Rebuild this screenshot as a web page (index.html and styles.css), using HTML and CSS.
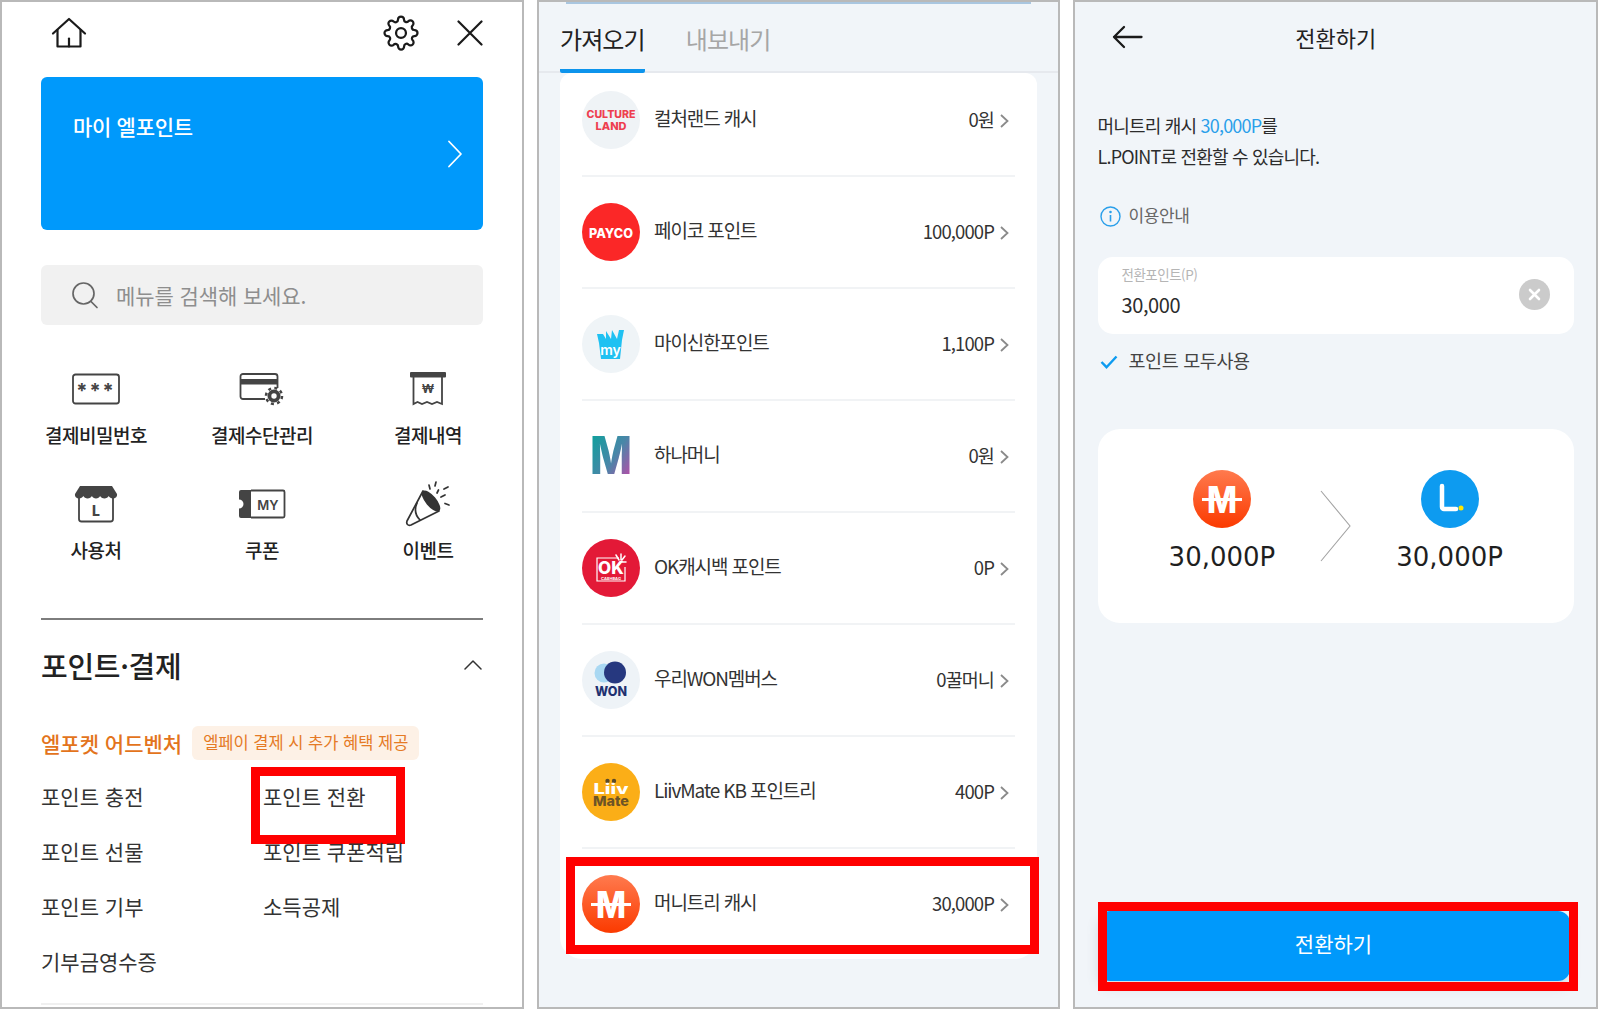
FILE: index.html
```html
<!DOCTYPE html>
<html lang="ko">
<head>
<meta charset="utf-8">
<title>포인트 전환</title>
<link rel="stylesheet" href="styles.css">
</head>
<body>
<main class="screens">

<section class="panel panel-menu">
  <header class="topbar">
    <svg class="i-home" width="36" height="32" viewBox="0 0 36 32" fill="none" stroke="#1a1a1a" stroke-width="2.2" stroke-linejoin="round" stroke-linecap="round"><path d="M2 16.5 18 2l16 14.5"/><path d="M6.500 13v16.500h23V13"/><path d="M18 29.500v-8"/></svg>
    <span class="topbar-right">
      <svg width="36" height="36" viewBox="0 0 24 24" fill="none" stroke="#1a1a1a" stroke-width="1.5"><circle cx="12" cy="12" r="3.300"/><path d="M19.400 15a1.650 1.650 0 0 0 .33 1.820l.06.06a2 2 0 0 1 0 2.830 2 2 0 0 1-2.830 0l-.06-.06a1.650 1.650 0 0 0-1.820-.33 1.650 1.650 0 0 0-1 1.510V21a2 2 0 0 1-2 2 2 2 0 0 1-2-2v-.09A1.650 1.650 0 0 0 9 19.400a1.650 1.650 0 0 0-1.820.33l-.06.06a2 2 0 0 1-2.830 0 2 2 0 0 1 0-2.830l.06-.06a1.650 1.650 0 0 0 .33-1.820 1.650 1.650 0 0 0-1.510-1H3a2 2 0 0 1-2-2 2 2 0 0 1 2-2h.09A1.650 1.650 0 0 0 4.600 9a1.650 1.650 0 0 0-.33-1.820l-.06-.06a2 2 0 0 1 0-2.830 2 2 0 0 1 2.830 0l.06.06a1.650 1.650 0 0 0 1.820.33H9a1.650 1.650 0 0 0 1-1.510V3a2 2 0 0 1 2-2 2 2 0 0 1 2 2v.09a1.650 1.650 0 0 0 1 1.510 1.650 1.650 0 0 0 1.820-.33l.06-.06a2 2 0 0 1 2.830 0 2 2 0 0 1 0 2.830l-.06.06a1.650 1.650 0 0 0-.33 1.820V9a1.650 1.650 0 0 0 1.510 1H21a2 2 0 0 1 2 2 2 2 0 0 1-2 2h-.09a1.650 1.650 0 0 0-1.510 1z"/></svg>
      <svg width="26" height="26" viewBox="0 0 26 26" fill="none" stroke="#1a1a1a" stroke-width="2.200" stroke-linecap="round"><path d="M1.500 1.500l23 23M24.500 1.500l-23 23"/></svg>
    </span>
  </header>

  <div class="mypoint">
    <span class="mypoint-title">마이 엘포인트</span>
    <svg class="mypoint-arrow" width="16" height="28" viewBox="0 0 16 28" fill="none" stroke="#fff" stroke-width="1.800" stroke-linecap="round" stroke-linejoin="round"><path d="M2 1.500 14 14 2 26.500"/></svg>
  </div>

  <div class="search">
    <svg width="28" height="28" viewBox="0 0 28 28" fill="none" stroke="#666" stroke-width="1.700" stroke-linecap="round"><circle cx="12.500" cy="12.500" r="10.500"/><path d="M20 20.500l6 6"/></svg>
    <span>메뉴를 검색해 보세요.</span>
  </div>

  <div class="shortcuts">
    <div class="shortcut">
      <span class="shortcut-icon"><svg width="48" height="32" viewBox="0 0 48 32"><rect x="1" y="1.500" width="46" height="29" rx="2.500" fill="none" stroke="#444" stroke-width="1.800"/><text class="svgtxt" x="24" y="25" text-anchor="middle" font-size="20" font-weight="700" letter-spacing="2" fill="#444">***</text></svg></span>
      <span class="shortcut-label">결제비밀번호</span>
    </div>
    <div class="shortcut">
      <span class="shortcut-icon"><svg width="46" height="36" viewBox="0 0 46 36"><path d="M26 28H4a2.500 2.500 0 0 1-2.500-2.500v-20A2.500 2.500 0 0 1 4 3h32a2.500 2.500 0 0 1 2.500 2.500V17" fill="none" stroke="#444" stroke-width="1.800"/><rect x="1.500" y="8" width="37" height="5.500" fill="#444"/><circle cx="35" cy="25" r="6.500" fill="#444"/><circle cx="35" cy="25" r="8" fill="none" stroke="#444" stroke-width="2.500" stroke-dasharray="3 3.300"/><circle cx="35" cy="25" r="2.700" fill="#fff"/></svg></span>
      <span class="shortcut-label">결제수단관리</span>
    </div>
    <div class="shortcut">
      <span class="shortcut-icon"><svg width="38" height="36" viewBox="0 0 38 36"><rect x="1" y="1" width="36" height="5.500" rx="1" fill="#444"/><path d="M4.500 6v27l4-2 4.500 2 5-2 5 2 5-2 5 2V6" fill="none" stroke="#444" stroke-width="1.800"/><text class="svgtxt" x="19" y="22" text-anchor="middle" font-size="12" font-weight="700" fill="#444">₩</text></svg></span>
      <span class="shortcut-label">결제내역</span>
    </div>
    <div class="shortcut">
      <span class="shortcut-icon"><svg width="44" height="38" viewBox="0 0 44 38"><path d="M5 12v22a2.500 2.500 0 0 0 2.500 2.500h29A2.500 2.500 0 0 0 39 34V12" fill="none" stroke="#444" stroke-width="1.800"/><path d="M6 1h32l5 8c.500 3-2 4.500-4 4.500s-3.500-1-4.300-2.500c-.700 1.500-2.400 2.500-4.300 2.500s-3.600-1-4.300-2.500c-.7 1.500-2.200 2.500-4.100 2.500s-3.400-1-4.100-2.500c-.8 1.500-2.400 2.500-4.300 2.500s-3.500-1-4.300-2.500C8.500 12.500 7 13.500 5 13.500S.500 12 1 9z" fill="#444"/><text class="svgtxt" x="22" y="31" text-anchor="middle" font-size="14" font-weight="800" fill="#444">L</text></svg></span>
      <span class="shortcut-label">사용처</span>
    </div>
    <div class="shortcut">
      <span class="shortcut-icon"><svg width="48" height="30" viewBox="0 0 48 30"><path d="M13 1H3a2 2 0 0 0-2 2v7.500a4.500 4.500 0 0 1 0 9V27a2 2 0 0 0 2 2h10z" fill="#444"/><path d="M13 1.500h32a1.500 1.500 0 0 1 1.500 1.500v24a1.500 1.500 0 0 1-1.500 1.500H13" fill="none" stroke="#444" stroke-width="1.800"/><text class="svgtxt" x="30" y="21" text-anchor="middle" font-size="13" font-weight="600" fill="#444">MY</text></svg></span>
      <span class="shortcut-label">쿠폰</span>
    </div>
    <div class="shortcut">
      <span class="shortcut-icon"><svg width="48" height="48" viewBox="0 0 48 48" fill="none" stroke="#333" stroke-width="1.700" stroke-linecap="round"><path d="M3 41 19 11l16 20-28 14c-3 1-5-1-4-4z" stroke-linejoin="round"/><path d="M13 23c-3 7-1 13 3 17"/><ellipse cx="27" cy="21" rx="12" ry="4.500" transform="rotate(50 27 21)" fill="#333"/><path d="M25 5l1 4M32 2l-1 4M33 13l1.500-3M44 7l-4 2M41 15l-4 2M45 25l-4-1.500M41 19"/></svg></span>
      <span class="shortcut-label">이벤트</span>
    </div>
  </div>

  <div class="section-head">
    <h2 class="section-title">포인트·결제</h2>
    <svg width="18" height="10" viewBox="0 0 18 10" fill="none" stroke="#333" stroke-width="1.500" stroke-linecap="round" stroke-linejoin="round"><path d="M1 9l8-8 8 8"/></svg>
  </div>

  <div class="promo">
    <span class="promo-title">엘포켓 어드벤처</span>
    <span class="promo-badge">엘페이 결제 시 추가 혜택 제공</span>
  </div>

  <ul class="menu">
    <li>포인트 충전</li>
    <li class="marked">포인트 전환</li>
    <li>포인트 선물</li>
    <li>포인트 쿠폰적립</li>
    <li>포인트 기부</li>
    <li>소득공제</li>
    <li>기부금영수증</li>
  </ul>
  <div class="menu-end"></div>
</section>

<section class="panel panel-list">
  <div class="topline"></div>
  <nav class="tabs">
    <span class="tab active">가져오기</span>
    <span class="tab">내보내기</span>
  </nav>
  <ul class="list">
    <li class="row">
      <svg class="logo" viewBox="0 0 58 58"><circle cx="29" cy="29" r="29" fill="#eff3f6"/><text class="svgtxt" x="29" y="27" text-anchor="middle" font-size="10.500" font-weight="800" fill="#ee3f50" textLength="49" lengthAdjust="spacingAndGlyphs">CULTURE</text><text class="svgtxt" x="29" y="39" text-anchor="middle" font-size="10.500" font-weight="800" fill="#ee3f50" textLength="31" lengthAdjust="spacingAndGlyphs">LAND</text></svg>
      <span class="row-name">컬처랜드 캐시</span><span class="row-value">0원</span>
      <svg class="row-arrow" width="9" height="14" viewBox="0 0 9 14" fill="none" stroke="#8a8a8a" stroke-width="1.800"><path d="M1 1l6.500 6L1 13"/></svg>
    </li>
    <li class="row">
      <svg class="logo" viewBox="0 0 58 58"><circle cx="29" cy="29" r="29" fill="#fb2727"/><text class="svgtxt" x="29" y="34.500" text-anchor="middle" font-size="13.500" font-weight="800" fill="#fff" textLength="44" lengthAdjust="spacingAndGlyphs">PAYCO</text></svg>
      <span class="row-name">페이코 포인트</span><span class="row-value">100,000P</span>
      <svg class="row-arrow" width="9" height="14" viewBox="0 0 9 14" fill="none" stroke="#8a8a8a" stroke-width="1.800"><path d="M1 1l6.500 6L1 13"/></svg>
    </li>
    <li class="row">
      <svg class="logo" viewBox="0 0 58 58"><circle cx="29" cy="29" r="29" fill="#eff4f7"/><path d="M15 19h6l3 5 0-8 5 8 1-9 5 9 2-9h5l-2 10-2 19H19l-2-16z" fill="#1fc1f2"/><text class="svgtxt" x="28.500" y="39.500" text-anchor="middle" font-size="14" font-weight="600" fill="#fff">my</text></svg>
      <span class="row-name">마이신한포인트</span><span class="row-value">1,100P</span>
      <svg class="row-arrow" width="9" height="14" viewBox="0 0 9 14" fill="none" stroke="#8a8a8a" stroke-width="1.800"><path d="M1 1l6.500 6L1 13"/></svg>
    </li>
    <li class="row">
      <svg class="logo" viewBox="0 0 58 58"><defs><linearGradient id="hana" x1="0" y1="0" x2="1" y2="1"><stop offset="0" stop-color="#00a79a"/><stop offset=".55" stop-color="#4a86a8"/><stop offset="1" stop-color="#d83aa8"/></linearGradient></defs><text class="svgtxt" x="29" y="47" text-anchor="middle" font-size="52" font-weight="800" fill="url(#hana)" textLength="42" lengthAdjust="spacingAndGlyphs">M</text></svg>
      <span class="row-name">하나머니</span><span class="row-value">0원</span>
      <svg class="row-arrow" width="9" height="14" viewBox="0 0 9 14" fill="none" stroke="#8a8a8a" stroke-width="1.800"><path d="M1 1l6.500 6L1 13"/></svg>
    </li>
    <li class="row">
      <svg class="logo" viewBox="0 0 58 58"><circle cx="29" cy="29" r="29" fill="#e31937"/><path d="M37 19H15v23h28V28" fill="none" stroke="#fff" stroke-width="1.200"/><text class="svgtxt" x="16" y="35" font-size="17" font-weight="800" fill="#fff">OK</text><text class="svgtxt" x="29" y="41" text-anchor="middle" font-size="4" font-weight="700" fill="#fff">CASHBAG</text><path d="M39 15v6M44 23h-5M34 16l3 5M43 17l-3 4" stroke="#fff" stroke-width="1.500" stroke-linecap="round"/></svg>
      <span class="row-name">OK캐시백 포인트</span><span class="row-value">0P</span>
      <svg class="row-arrow" width="9" height="14" viewBox="0 0 9 14" fill="none" stroke="#8a8a8a" stroke-width="1.800"><path d="M1 1l6.500 6L1 13"/></svg>
    </li>
    <li class="row">
      <svg class="logo" viewBox="0 0 58 58"><circle cx="29" cy="29" r="29" fill="#eef3f7"/><circle cx="22" cy="22" r="9.500" fill="#a9d8f2"/><circle cx="33" cy="21.500" r="11" fill="#26387f"/><text class="svgtxt" x="29" y="45" text-anchor="middle" font-size="12.500" font-weight="800" fill="#1f3170" textLength="32" lengthAdjust="spacingAndGlyphs">WON</text></svg>
      <span class="row-name">우리WON멤버스</span><span class="row-value">0꿀머니</span>
      <svg class="row-arrow" width="9" height="14" viewBox="0 0 9 14" fill="none" stroke="#8a8a8a" stroke-width="1.800"><path d="M1 1l6.500 6L1 13"/></svg>
    </li>
    <li class="row">
      <svg class="logo" viewBox="0 0 58 58"><circle cx="29" cy="29" r="29" fill="#fbae17"/><circle cx="25.500" cy="18" r="2.200" fill="#5b4a2a"/><circle cx="32" cy="18" r="2.200" fill="#5b4a2a"/><text class="svgtxt" x="29" y="31" text-anchor="middle" font-size="14.500" font-weight="800" fill="#fff" textLength="35" lengthAdjust="spacingAndGlyphs">Liiv</text><text class="svgtxt" x="29" y="43" text-anchor="middle" font-size="13.500" font-weight="800" fill="#6d5426" textLength="36" lengthAdjust="spacingAndGlyphs">Mate</text></svg>
      <span class="row-name">LiivMate KB 포인트리</span><span class="row-value">400P</span>
      <svg class="row-arrow" width="9" height="14" viewBox="0 0 9 14" fill="none" stroke="#8a8a8a" stroke-width="1.800"><path d="M1 1l6.500 6L1 13"/></svg>
    </li>
    <li class="row marked-row">
      <svg class="logo" viewBox="0 0 58 58"><defs><linearGradient id="mt1" x1="0" y1="0" x2="0" y2="1"><stop offset="0" stop-color="#ff7a4e"/><stop offset="1" stop-color="#fb3a00"/></linearGradient></defs><circle cx="29" cy="29" r="29" fill="url(#mt1)"/><rect x="9" y="28" width="40" height="3" fill="#fff"/><text class="svgtxt" x="29" y="43" text-anchor="middle" font-size="37" font-weight="800" fill="#fff" textLength="30" lengthAdjust="spacingAndGlyphs">M</text></svg>
      <span class="row-name">머니트리 캐시</span><span class="row-value">30,000P</span>
      <svg class="row-arrow" width="9" height="14" viewBox="0 0 9 14" fill="none" stroke="#8a8a8a" stroke-width="1.800"><path d="M1 1l6.500 6L1 13"/></svg>
    </li>
  </ul>
</section>

<section class="panel panel-convert">
  <header class="convert-head">
    <svg width="31" height="24" viewBox="0 0 31 24" fill="none" stroke="#1a1a1a" stroke-width="2.300" stroke-linecap="round" stroke-linejoin="round"><path d="M29.500 12H2M12 2 2 12l10 10"/></svg>
    <h1 class="convert-title">전환하기</h1>
    <span></span>
  </header>
  <p class="convert-desc">머니트리 캐시 <em>30,000P</em>를<br>L.POINT로 전환할 수 있습니다.</p>
  <div class="notice">
    <svg width="21" height="21" viewBox="0 0 21 21" fill="none" stroke="#2a9fea" stroke-width="1.400"><circle cx="10.500" cy="10.500" r="9.500"/><path d="M10.500 9v6.500" stroke-width="1.600"/><circle cx="10.500" cy="6" r=".6" fill="#2a9fea"/></svg>
    <span>이용안내</span>
  </div>
  <div class="field">
    <div class="field-body">
      <span class="field-label">전환포인트(P)</span>
      <span class="field-value">30,000</span>
    </div>
    <svg class="field-clear" width="31" height="31" viewBox="0 0 31 31"><circle cx="15.500" cy="15.500" r="15.500" fill="#cbcbcb"/><path d="M11 11l9 9M20 11l-9 9" stroke="#fff" stroke-width="2.600" stroke-linecap="round"/></svg>
  </div>
  <div class="useall">
    <svg width="18" height="14" viewBox="0 0 18 14" fill="none" stroke="#0d9bf0" stroke-width="2.400"><path d="M1.500 7l5 5.200L16.500 1.500"/></svg>
    <span>포인트 모두사용</span>
  </div>
  <div class="flow">
    <div class="flow-side">
      <svg class="flow-logo" viewBox="0 0 58 58"><defs><linearGradient id="mt2" x1="0" y1="0" x2="0" y2="1"><stop offset="0" stop-color="#ff7a4e"/><stop offset="1" stop-color="#fb3a00"/></linearGradient></defs><circle cx="29" cy="29" r="29" fill="url(#mt2)"/><rect x="9" y="28" width="40" height="3" fill="#fff"/><text class="svgtxt" x="29" y="43" text-anchor="middle" font-size="37" font-weight="800" fill="#fff" textLength="30" lengthAdjust="spacingAndGlyphs">M</text></svg>
      <span class="flow-num">30,000P</span>
    </div>
    <svg class="flow-arrow" width="31" height="72" viewBox="0 0 31 72" fill="none" stroke="#a3a3a3" stroke-width="1.100"><path d="M1 1l29 35L1 71"/></svg>
    <div class="flow-side">
      <svg class="flow-logo" viewBox="0 0 58 58"><circle cx="29" cy="29" r="29" fill="#0d9bf0"/><path d="M21 16v21a2 2 0 0 0 2 2h12" fill="none" stroke="#fff" stroke-width="4.500" stroke-linecap="round"/><circle cx="40" cy="38" r="2.500" fill="#ffe600"/></svg>
      <span class="flow-num">30,000P</span>
    </div>
  </div>
  <div class="submit">전환하기</div>
</section>

</main>
</body>
</html>
```

FILE: styles.css
```css
* { box-sizing: border-box; }
html, body { margin: 0; padding: 0; }
body {
  width: 1598px;
  height: 1009px;
  overflow: hidden;
  background: #fff;
  font-family: "Noto Sans CJK KR", "Noto Sans", sans-serif;
  color: #333;
}
h1, h2, p, ul { margin: 0; padding: 0; }
ul { list-style: none; }
em { font-style: normal; }
.svgtxt { font-family: "Inter", "Liberation Sans", sans-serif; }

.screens { display: flex; gap: 13px; height: 1009px; }
.panel {
  border: 2px solid #b9b9b9;
  height: 1009px;
  flex: none;
  display: flex;
  flex-direction: column;
  overflow: hidden;
}

/* menu */
.panel-menu { width: 524px; padding: 0 39px; background: #fff; }
.topbar { height: 62px; margin-bottom: 13px; display: flex; align-items: center; justify-content: space-between; padding-left: 10px; flex: none; }
.topbar-right { display: flex; align-items: center; gap: 38px; margin-right: 0; }
.mypoint {
  height: 153px; flex: none; background: #0099fb; border-radius: 6px;
  padding: 33px 32px 0; display: flex; justify-content: space-between; align-items: flex-start;
}
.mypoint-title { color: #fff; font-size: 21px; font-weight: 500; line-height: 32px; letter-spacing: -.3px; }
.mypoint-arrow { margin: 30px -12px 0 0; }
.search {
  margin-top: 35px; height: 60px; flex: none; background: #f1f1f1; border-radius: 6px;
  display: flex; align-items: center; gap: 17px; padding-left: 30px;
  color: #8e8e8e; font-size: 21px; letter-spacing: -.1px;
}
.shortcuts { margin: 42px -28px 0; display: grid; grid-template-columns: repeat(3, 166px); row-gap: 32.5px; flex: none; }
.shortcut { display: flex; flex-direction: column; align-items: center; }
.shortcut-icon { height: 44px; display: flex; align-items: center; justify-content: center; }
.shortcut-label { margin-top: 10px; font-size: 19px; line-height: 28px; font-weight: 500; color: #222; letter-spacing: -.5px; }
.section-head {
  margin-top: 54px; border-top: 2px solid #7d7d7d; padding-top: 25px; flex: none;
  display: flex; align-items: center; justify-content: space-between; padding-right: 1px;
}
.section-title { font-size: 29px; line-height: 40px; font-weight: 500; color: #222; letter-spacing: -.3px; }
.promo { margin-top: 41px; display: flex; align-items: center; gap: 10px; height: 34px; flex: none; }
.promo-title { font-size: 21px; font-weight: 500; color: #e3741c; }
.promo-badge { height: 34px; line-height: 33px; padding: 0 11px; background: #fdf1e6; border-radius: 6px; font-size: 16.500px; color: #e57a25; }
.menu { margin-top: 9px; display: grid; grid-template-columns: 222px 1fr; grid-auto-rows: 55.300px; flex: none; }
.menu li { font-size: 21px; line-height: 55px; color: #333; position: relative; }
.menu li.marked::after {
  content: ""; position: absolute; left: -12px; top: -2px; width: 136px; height: 59px;
  border: 9px solid #ff0000;
}
.menu-end { margin-top: 13px; height: 2px; background: #f0f0f0; flex: none; }

/* list */
.panel-list { width: 523px; background: #f1f5f9; }
.topline { height: 3px; margin: -1px 27px 0; background: #a9c6e0; flex: none; }
.tabs { height: 69px; flex: none; padding-left: 21px; display: flex; gap: 41px; border-bottom: 2px solid #e6e9ee; }
.tab { height: 69px; margin-bottom: -2px; line-height: 70px; font-size: 24px; letter-spacing: -.9px; color: #a6a6a6; border-bottom: 4px solid transparent; position: relative; }
.tab.active { color: #222; border-bottom-color: #0d94ec; border-radius: 0 0 2px 2px; }
.list { width: 477px; margin-left: 21px; padding: 0 22px; background: #fff; border-radius: 12px 12px 22px 22px; flex: none; }
.row { display: flex; align-items: center; padding: 26px 0; border-bottom: 2px solid #f1f3f5; position: relative; }
.row:first-child { padding-top: 18px; }
.row:last-child { border-bottom: 0; }
.logo { width: 58px; height: 58px; flex: none; }
.row-name { margin-left: 14px; flex: 1; font-size: 19px; letter-spacing: -1.100px; color: #333; line-height: 28px; padding-bottom: 4px; }
.row-value { font-size: 18.500px; letter-spacing: -.9px; color: #333; line-height: 28px; padding-bottom: 2px; }
.row-arrow { margin: 2px 6px 0 6px; flex: none; }
.marked-row::after {
  content: ""; position: absolute; left: -16px; right: -24px; top: 8px; bottom: 5px;
  border: 9px solid #ff0000;
}

/* convert */
.panel-convert { width: 525px; background: #f1f5f9; padding: 0 22px 26px 22.500px; }
.convert-head { height: 70px; flex: none; display: grid; grid-template-columns: 1fr auto 1fr; align-items: center; }
.convert-head svg { margin-left: 14px; }
.convert-title { font-size: 22px; line-height: 30px; font-weight: 400; color: #222; }
.convert-desc { margin-top: 38px; font-size: 18px; line-height: 31px; letter-spacing: -.8px; color: #2c2c2c; flex: none; }
.convert-desc em { color: #2a9fea; }
.notice { margin-top: 28px; height: 30px; flex: none; display: flex; align-items: center; gap: 8px; padding-left: 2px; color: #666; font-size: 17px; letter-spacing: -.4px; }
.notice svg { margin-top: 3px; }
.notice span { margin-bottom: 2px; }
.field {
  margin-top: 27px; height: 77px; flex: none; background: #fff; border-radius: 15px;
  display: flex; align-items: center; justify-content: space-between; padding: 0 24px;
}
.field-body { display: flex; flex-direction: column; }
.field-label { font-size: 13.500px; line-height: 18px; color: #b5b5b5; letter-spacing: -.5px; margin-top: -7px; }
.field-value { font-size: 20px; line-height: 30px; margin-top: 7px; color: #2c2c2c; letter-spacing: -.4px; }
.field-clear { margin-top: -2px; }
.useall { margin-top: 11px; height: 30px; flex: none; display: flex; align-items: center; gap: 11px; padding-left: 2px; font-size: 18.500px; letter-spacing: -.4px; color: #444; }
.useall svg { margin-top: 3px; }
.flow {
  margin-top: 54px; height: 194px; flex: none; background: #fff; border-radius: 22px;
  display: flex; align-items: center; justify-content: center; gap: 45px; padding-top: 0;
}
.flow-side { display: flex; flex-direction: column; align-items: center; margin-top: -9px; }
.flow-logo { width: 58px; height: 58px; }
.flow-num { margin-top: 12px; font-family: "DejaVu Sans", sans-serif; font-size: 26px; line-height: 34px; color: #1f1f1f; }
.flow-arrow { margin-top: 0; }
.submit {
  margin-top: auto; height: 70px; width: 472px; flex: none; background: #0099fb; border-radius: 12px;
  color: #fff; font-size: 21px; text-align: center; line-height: 64px; position: relative;
  box-shadow: 0 6px 12px rgba(90, 110, 130, .18);
}
.submit::after {
  content: ""; position: absolute; left: 0; right: -8px; top: -9px; bottom: -10px;
  border: 9px solid #ff0000;
}
```
